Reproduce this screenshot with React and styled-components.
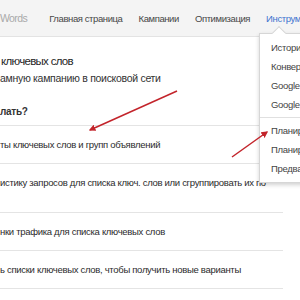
import React from "react";
import styled, { createGlobalStyle } from "styled-components";

const GlobalStyle = createGlobalStyle`
  html, body {
    margin: 0;
    padding: 0;
    background: #fff;
  }
  body {
    font-family: "Liberation Sans", Arial, sans-serif;
    overflow: hidden;
  }
`;

const navItems = [
  { label: "Главная страница" },
  { label: "Кампании" },
  { label: "Оптимизация" },
  { label: "Инструменты", active: true },
];

const rows = [
  { text: "ты ключевых слов и групп объявлений" },
  { text: "истику запросов для списка ключ. слов или сгруппировать их по", tall: true },
  { text: "нки трафика для списка ключевых слов" },
  { text: "ь списки ключевых слов, чтобы получить новые варианты" },
];

const menuItems = [
  "История изменений",
  "Конвертации",
  "Google Analytics",
  "Google Merchant Center",
  null,
  "Планировщик ключевых слов",
  "Планировщик КМС",
  "Предварительный просмотр",
];

const App = () => {
  return (
    <Page>
      <GlobalStyle />
      <Header>
        <Logo>Words</Logo>
        <Nav>
          {navItems.map((item) => (
            <NavItem key={item.label} $active={item.active}>
              {item.label}
            </NavItem>
          ))}
        </Nav>
      </Header>
      <Main>
        <Content>
          <Title>ключевых слов</Title>
          <Subtitle>амную кампанию в поисковой сети</Subtitle>
          <Question>лать?</Question>
          <Options>
            {rows.map((row) => (
              <Option key={row.text} $tall={row.tall}>
                {row.text}
              </Option>
            ))}
          </Options>
        </Content>
        <Menu>
          {menuItems.map((item, i) =>
            item ? <MenuItem key={item}>{item}</MenuItem> : <MenuDivider key={i} />
          )}
        </Menu>
        <Arrows width="300" height="263" viewBox="0 37 300 263">
          <defs>
            <marker
              id="head"
              viewBox="0 0 10 10"
              refX="8"
              refY="5"
              markerWidth="4.5"
              markerHeight="4.5"
              orient="auto-start-reverse"
            >
              <path d="M0 0 L10 5 L0 10 z" fill="#c3242b" />
            </marker>
          </defs>
          <line x1="177" y1="91" x2="90" y2="130" stroke="#c3242b" strokeWidth="1.5" markerEnd="url(#head)" />
          <line x1="232" y1="157" x2="267" y2="132" stroke="#c3242b" strokeWidth="1.5" markerEnd="url(#head)" />
        </Arrows>
      </Main>
    </Page>
  );
};

/**
 *  STYLES
 */
const Page = styled.div`
  width: 300px;
  height: 300px;
  overflow: hidden;
  display: flex;
  flex-direction: column;
`;

const Header = styled.div`
  height: 36px;
  flex: none;
  background: #f4f4f4;
  border-bottom: 1px solid #e3e3e3;
  display: flex;
  align-items: center;
  white-space: nowrap;
`;

const Logo = styled.div`
  font-size: 10.5px;
  letter-spacing: -0.6px;
  color: #a9a9a9;
  margin-right: 22px;
`;

const Nav = styled.div`
  display: flex;
  gap: 16px;
`;

const NavItem = styled.div`
  font-size: 9.5px;
  letter-spacing: -0.4px;
  color: ${(p) => (p.$active ? "#3f74d0" : "#474747")};
`;

const Main = styled.div`
  position: relative;
  flex: 1;
`;

const Content = styled.div`
  width: 283px;
  padding-top: 15px;
  color: #262626;
`;

const Title = styled.div`
  font-size: 11.5px;
  letter-spacing: -0.7px;
  line-height: 18px;
  margin-left: 1px;
  color: #1f1f1f;
`;

const Subtitle = styled.div`
  font-size: 10.5px;
  letter-spacing: -0.3px;
  line-height: 16px;
  color: #333;
`;

const Question = styled.div`
  margin-top: 18px;
  font-size: 10px;
  letter-spacing: -0.3px;
  line-height: 16px;
  font-weight: bold;
  color: #333;
`;

const Options = styled.div`
  margin-top: 5px;
  border-top: 1px solid #e4e4e4;
`;

const Option = styled.div`
  font-size: 9.5px;
  letter-spacing: -0.3px;
  line-height: 14px;
  color: #2b2b2b;
  white-space: nowrap;
  height: ${(p) => (p.$tall ? "49px" : "38px")};
  box-sizing: border-box;
  padding-top: 12px;
  border-bottom: 1px solid #e4e4e4;
`;

const Menu = styled.div`
  position: absolute;
  left: 259px;
  top: -4px;
  width: 160px;
  padding: 4px 0;
  background: #fff;
  border: 1px solid #d6d6d6;
  box-shadow: 0 2px 4px rgba(0, 0, 0, 0.18);
  white-space: nowrap;

  &::before {
    content: "";
    position: absolute;
    left: 14px;
    top: -6px;
    width: 9px;
    height: 9px;
    background: #fff;
    border-left: 1px solid #d6d6d6;
    border-top: 1px solid #d6d6d6;
    transform: rotate(45deg);
  }
`;

const MenuItem = styled.div`
  font-size: 9.5px;
  letter-spacing: -0.3px;
  line-height: 19px;
  padding-left: 11px;
  color: #444;
`;

const MenuDivider = styled.div`
  height: 1px;
  margin: 3px 0;
  background: #e0e0e0;
`;

const Arrows = styled.svg`
  position: absolute;
  left: 0;
  top: 0;
  pointer-events: none;
`;

export default App;
